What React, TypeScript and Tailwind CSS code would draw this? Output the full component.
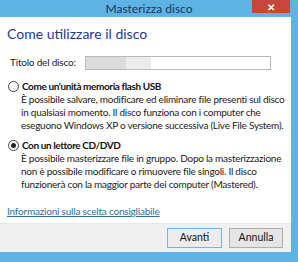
export default function App() {
  return (
    <div
      className="w-[298px] h-[262px] bg-[#5eb3e6] flex flex-col overflow-hidden"
      style={{ fontFamily: 'Lato, "Liberation Sans", sans-serif' }}
    >
      {/* Title bar */}
      <div className="relative h-[17px] flex items-center justify-center shrink-0">
        <span className="text-[12px] leading-none text-[#1b3553]">Masterizza disco</span>
        <div className="absolute right-[8px] top-0 w-[38px] h-[13px] bg-[#c9463d] flex items-center justify-center">
          <span className="text-white text-[10px] leading-none font-bold">✕</span>
        </div>
      </div>

      {/* Body */}
      <div className="flex flex-col mr-[7px] h-[235px]">
        <div className="bg-white flex flex-col h-[206px] pl-[7px] whitespace-nowrap">
          <h1 className="mt-[8px] text-[14px] leading-[18px] text-[#1e3a8c] font-normal">
            Come utilizzare il disco
          </h1>

          <div className="flex items-center mt-[12px] pl-[3px]">
            <span className="text-[10px] tracking-[-0.2px] text-[#1a1a1a] w-[75px]">
              Titolo del disco:
            </span>
            <div className="w-[186px] h-[14px] border border-[#b9b9b9] flex">
              <div className="w-[40px] bg-[#dcdcdc]" />
              <div className="w-[25px] bg-[#ececec]" />
            </div>
          </div>

          <div className="mt-[10px] flex items-center gap-[3px] pl-[1px]">
            <div className="w-[11px] h-[11px] rounded-full border border-[#444] bg-white" />
            <span className="text-[10px] tracking-[-0.4px] leading-[13px] font-bold text-[#111]">
              Come un'unità memoria flash USB
            </span>
          </div>
          <p className="pl-[14px] text-[10px] tracking-[-0.25px] leading-[13px] text-[#222]">
            È possibile salvare, modificare ed eliminare file presenti sul disco
            <br />
            in qualsiasi momento. Il disco funziona con i computer che
            <br />
            eseguono Windows XP o versione successiva (Live File System).
          </p>

          <div className="mt-[7px] flex items-center gap-[3px] pl-[1px]">
            <div className="w-[11px] h-[11px] rounded-full border border-[#444] bg-white flex items-center justify-center">
              <div className="w-[5px] h-[5px] rounded-full bg-[#222]" />
            </div>
            <span className="text-[10px] tracking-[-0.4px] leading-[13px] font-bold text-[#111]">
              Con un lettore CD/DVD
            </span>
          </div>
          <p className="pl-[14px] text-[10px] tracking-[-0.25px] leading-[13px] text-[#222]">
            È possibile masterizzare file in gruppo. Dopo la masterizzazione
            <br />
            non è possibile modificare o rimuovere file singoli. Il disco
            <br />
            funzionerà con la maggior parte dei computer (Mastered).
          </p>

          <a className="mt-[14px] text-[10px] tracking-[-0.2px] leading-[13px] text-[#2a6f9e] underline">
            Informazioni sulla scelta consigliabile
          </a>
        </div>

        <div className="bg-[#f0f0f0] h-[29px] flex items-center justify-end gap-[7px] pr-[8px] border-t border-[#e6e6e6]">
          <button className="w-[55px] h-[20px] border border-[#7ab3dd] bg-[#ececec] text-[10.5px] text-[#111]">
            Avanti
          </button>
          <button className="w-[54px] h-[20px] border border-[#adadad] bg-[#e5e5e5] text-[10.5px] text-[#111]">
            Annulla
          </button>
        </div>
      </div>
    </div>
  );
}
